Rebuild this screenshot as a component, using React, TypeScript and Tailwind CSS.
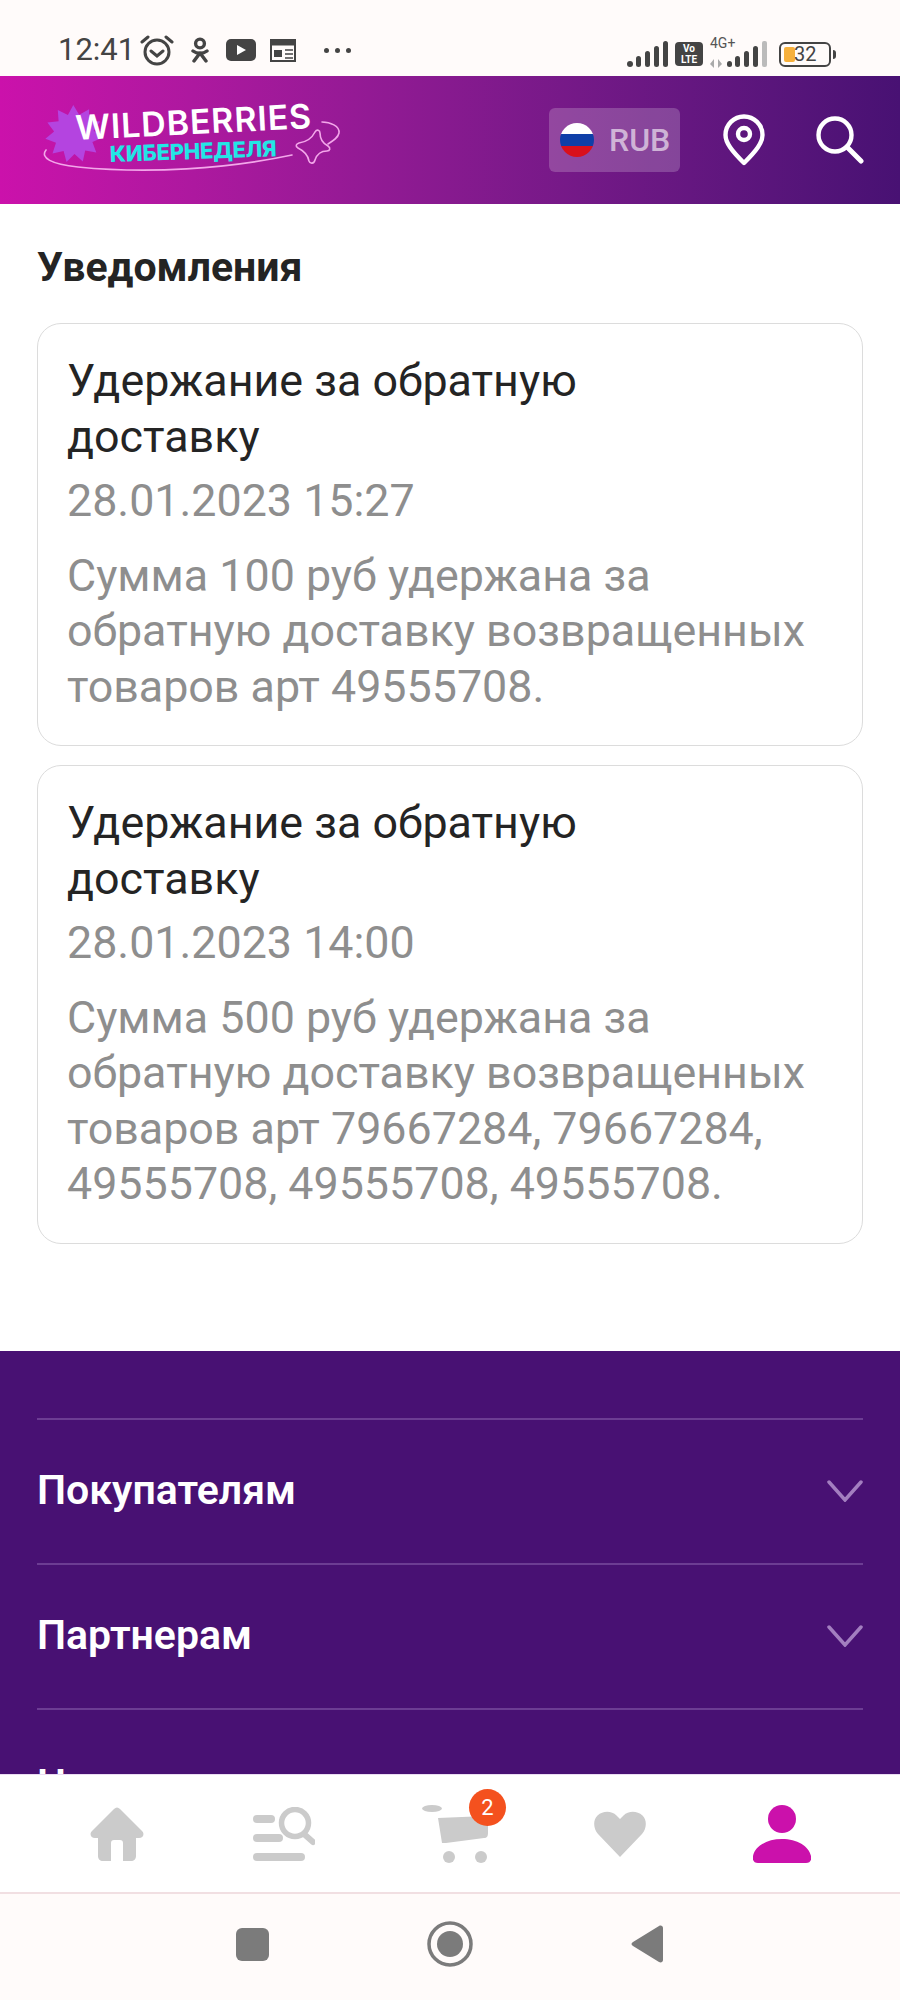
const font = "font-['Roboto','Noto_Sans',sans-serif]";

const notices = [
  {
    date: "28.01.2023 15:27",
    text: "Сумма 100 руб удержана за обратную доставку возвращенных товаров арт 49555708.",
  },
  {
    date: "28.01.2023 14:00",
    text: "Сумма 500 руб удержана за обратную доставку возвращенных товаров арт 79667284, 79667284, 49555708, 49555708, 49555708.",
  },
];

// spiky badge behind the logo
const starPoints = Array.from({ length: 22 }, (_, i) => {
  const r = i % 2 === 0 ? 29 : 20;
  const a = (i / 22) * Math.PI * 2 + 0.12;
  return `${(74 + r * Math.cos(a)).toFixed(1)},${(58 + r * Math.sin(a)).toFixed(1)}`;
}).join(" ");

const Logo = () => (
  <svg width="350" height="128" viewBox="0 0 350 128" className="shrink-0">
    <polygon points={starPoints} fill="#b444e0" />
    <text x="0" y="0" transform="translate(76 64) rotate(-2.9)" fill="#fff" fontFamily="Inter, sans-serif" fontSize="34" fontWeight="600" textLength="236">
      WILDBERRIES
    </text>
    <text x="0" y="0" transform="translate(110 86) rotate(-2)" fill="#22e6e6" fontFamily="Inter, sans-serif" fontSize="22" fontWeight="800" textLength="167">
      КИБЕРНЕДЕЛЯ
    </text>
    <path d="M46 74c-6 8 5 14 32 17 70 7 148 2 214-12" fill="none" stroke="#f3a7ea" strokeWidth="1.6" strokeLinecap="round" />
    <path d="M322 46c8 0 18 4 17 11-1 5-6 8-11 11" fill="none" stroke="#f3a7ea" strokeWidth="1.6" strokeLinecap="round" />
    <path
      d="M315 56c2-3 5-2 5 1 0 6 2 10 8 13 3 2 2 5-1 5-6 0-10 3-12 9-1 4-5 4-6 1-1-6-5-10-11-13-3-2-2-4 1-5 7-1 13-5 16-11z"
      fill="none"
      stroke="#f3a7ea"
      strokeWidth="1.6"
    />
  </svg>
);

const StatusBar = () => (
  <div className="h-[76px] bg-[#fffbfa] flex items-end justify-between pl-[58px] pr-[64px] pb-[8px] text-[#444]">
    <div className="flex items-center">
      <span className="text-[31px] leading-[36px]">12:41</span>
      <svg width="34" height="32" viewBox="0 0 34 32" className="ml-[5px]" fill="none" stroke="#444" strokeWidth="3">
        <circle cx="17" cy="18" r="12" />
        <path d="M11 17l6 5 6-5M2 8l6-5M32 8l-6-5" strokeLinecap="round" />
      </svg>
      <svg width="18" height="26" viewBox="0 0 18 26" className="ml-[17px]" fill="none" stroke="#444" strokeWidth="3.4">
        <circle cx="9" cy="6.5" r="4.4" />
        <path d="M2 14c4 3 10 3 14 0M9 16l-6 8M9 16l6 8" strokeLinecap="round" />
      </svg>
      <svg width="30" height="22" viewBox="0 0 30 22" className="ml-[17px]">
        <rect width="30" height="22" rx="5" fill="#444" />
        <path d="M11 6l9 5-9 5z" fill="#fff" />
      </svg>
      <svg width="26" height="24" viewBox="0 0 26 24" className="ml-[14px]" fill="none" stroke="#444" strokeWidth="2">
        <rect x="1" y="2" width="24" height="21" />
        <path d="M1 5h24" strokeWidth="5" />
        <path d="M4 12h8v7H4z" fill="#444" stroke="none" />
        <path d="M15 12h8M15 16h8M15 20h8" strokeWidth="1.5" />
      </svg>
      <div className="flex gap-[6px] ml-[28px]">
        <span className="w-[5px] h-[5px] rounded-full bg-[#444]" />
        <span className="w-[5px] h-[5px] rounded-full bg-[#444]" />
        <span className="w-[5px] h-[5px] rounded-full bg-[#444]" />
      </div>
    </div>
    <div className="flex items-center">
      <svg width="41" height="26" viewBox="0 0 41 26" fill="#444">
        <rect x="0" y="20" width="6" height="6" rx="3" />
        <rect x="9" y="15" width="5" height="11" rx="2.5" />
        <rect x="18" y="10" width="5" height="16" rx="2.5" />
        <rect x="27" y="5" width="5" height="21" rx="2.5" />
        <rect x="36" y="0" width="5" height="26" rx="2.5" />
      </svg>
      <div className="ml-[7px] w-[28px] h-[24px] rounded-[4px] bg-[#444] text-white text-[10px] leading-[11px] font-bold text-center flex flex-col justify-center">
        <span>Vo</span>
        <span>LTE</span>
      </div>
      <div className="ml-[7px] w-[28px] h-[28px] relative">
        <span className="absolute left-0 top-[-4px] text-[14px] leading-[14px] text-[#555]">4G+</span>
        <svg width="12" height="9" viewBox="0 0 12 9" className="absolute left-0 bottom-0" fill="#aaa">
          <path d="M4 0v9L0 5zM8 0v9l4-4z" />
        </svg>
      </div>
      <svg width="40" height="26" viewBox="0 0 40 26" fill="#444" className="ml-[-11px]">
        <rect x="0" y="20" width="5" height="6" rx="2.5" />
        <rect x="8" y="15" width="5" height="11" rx="2.5" />
        <rect x="17" y="10" width="5" height="16" rx="2.5" />
        <rect x="26" y="5" width="5" height="21" rx="2.5" />
        <rect x="35" y="0" width="5" height="26" rx="2" fill="#bbb" />
      </svg>
      <div className="ml-[12px] w-[52px] h-[25px] rounded-[6px] border-2 border-[#444] relative flex items-center">
        <span className="absolute left-[3px] top-[3px] w-[11px] h-[15px] bg-[#f6b03c] rounded-[2px]" />
        <span className="relative ml-[13px] text-[20px] leading-[21px] text-[#444]">32</span>
      </div>
      <span className="ml-[2px] w-[3px] h-[9px] rounded-r-sm bg-[#444]" />
    </div>
  </div>
);

const Header = () => (
  <header className="h-[128px] bg-gradient-to-r from-[#cb11ab] to-[#481173] flex items-center">
    <Logo />
    <div className="ml-auto flex items-center pr-[36px]">
      <div className="w-[131px] h-[64px] rounded-[6px] bg-white/20 flex items-center pl-[11px] gap-[15px]">
        <svg width="34" height="34" viewBox="0 0 34 34">
          <defs>
            <clipPath id="flag">
              <circle cx="17" cy="17" r="17" />
            </clipPath>
          </defs>
          <g clipPath="url(#flag)">
            <rect width="34" height="12" fill="#fff" />
            <rect y="11" width="34" height="12" fill="#0f3fa8" />
            <rect y="23" width="34" height="11" fill="#d9101c" />
          </g>
        </svg>
        <span className={`${font} text-[32px] font-medium text-white/60`}>RUB</span>
      </div>
      <svg width="42" height="52" viewBox="0 0 42 52" className="ml-[43px]" fill="none" stroke="#fff" strokeWidth="4.4" strokeLinejoin="round">
        <path d="M21 49C9 37 2.5 29 2.5 21a18.5 18.5 0 0 1 37 0c0 8-6.500 16-18.500 28z" />
        <circle cx="21" cy="20" r="6" />
      </svg>
      <svg width="48" height="48" viewBox="0 0 48 48" className="ml-[51px]" fill="none" stroke="#fff" strokeWidth="4.4" strokeLinecap="round">
        <circle cx="19" cy="19" r="16.500" />
        <path d="M31 31l14 14" strokeWidth="5" />
      </svg>
    </div>
  </header>
);

const NoticeCard = ({ date, text }: { date: string; text: string }) => (
  <div className="border-[1.5px] border-[#dcdcdc] rounded-[24px] pl-[29px] pr-[40px] pt-[29px] pb-[31px]">
    <h3 className="text-[44.8px] leading-[55.5px] text-[#242424] max-w-[600px]">Удержание за обратную доставку</h3>
    <p className="text-[44.8px] leading-[55.5px] mt-[9px] text-[#8e8e8e]">{date}</p>
    <p className="text-[44.8px] leading-[55.5px] mt-[19px] text-[#8e8e8e]">{text}</p>
  </div>
);

const FooterRow = ({ title, className = "" }: { title: string; className?: string }) => (
  <div className={`h-[145px] border-t-2 border-[#6c3d93] flex items-center justify-between ${className}`}>
    <span className="text-[41px] font-semibold text-white">{title}</span>
    <svg width="36" height="22" viewBox="0 0 36 22" fill="none" stroke="#a37fc0" strokeWidth="3.500" strokeLinecap="round">
      <path d="M2 2l16 18L34 2" />
    </svg>
  </div>
);

const BottomNav = () => (
  <nav className="h-[118px] bg-white grid grid-cols-5 px-[35px] border-t border-[#eadcf2]">
    <div className="flex items-center justify-center">
      <svg width="54" height="54" viewBox="0 0 54 54" fill="#cbcbcb" className="mr-[2px]">
        <path d="M24 2c2-2 4-2 6 0l22 22c3 3 1 7-3 7h-3v18c0 3-2 5-5 5h-8V36c0-2-1-3-3-3h-6c-2 0-3 1-3 3v18h-8c-3 0-5-2-5-5V31H5c-4 0-6-4-3-7z" />
      </svg>
    </div>
    <div className="flex items-center justify-center">
      <svg width="62" height="54" viewBox="0 0 62 54" fill="#cbcbcb">
        <rect x="0" y="8" width="22" height="8" rx="4" />
        <rect x="0" y="27" width="30" height="8" rx="4" />
        <rect x="0" y="46" width="52" height="8" rx="4" />
        <circle cx="42" cy="16" r="13.500" fill="none" stroke="#cbcbcb" strokeWidth="5.500" />
        <path d="M51 27l9 8" stroke="#cbcbcb" strokeWidth="6" strokeLinecap="round" />
      </svg>
    </div>
    <div className="relative flex items-center justify-center">
      <svg width="66" height="58" viewBox="0 0 66 58" fill="#cbcbcb" className="ml-[10px]">
        <ellipse cx="10" cy="3.500" rx="10" ry="3.500" />
        <path d="M16 13l48-2c2 0 2 1 2 3v14c0 3-1 5-4 5l-38 5-4 0z" />
        <circle cx="27" cy="52" r="6" />
        <circle cx="59" cy="52" r="6" />
      </svg>
      <span className="absolute left-[102px] top-[14px] w-[37px] h-[37px] rounded-full bg-[#f4511e] text-white text-[22px] leading-[37px] text-center">2</span>
    </div>
    <div className="flex items-center justify-center">
      <svg width="52" height="46" viewBox="0 0 52 46" fill="#cbcbcb" className="ml-[8px]">
        <path d="M26 46L4 23C-1 17-1 9 3.500 4.500c5.500-5 14-5 19 0L26 8l3.500-3.500c5-5 13.500-5 19 0C53 9 53 17 48 23z" />
      </svg>
    </div>
    <div className="flex items-center justify-center">
      <svg width="58" height="58" viewBox="0 0 58 58" fill="#cb11ab">
        <circle cx="29" cy="14" r="14" />
        <path d="M0 51C2 41 14 34 29 34s27 7 29 17c1 4-1 7-5 7H5c-4 0-6-3-5-7z" />
      </svg>
    </div>
  </nav>
);

const SystemBar = () => (
  <div className="h-[108px] bg-[#fffbfa] border-t-2 border-[#f1dfe2] flex items-center pb-[6px]">
    <div className="ml-[236px] w-[33px] h-[33px] rounded-[6px] bg-[#7b7b7b]" />
    <svg width="46" height="46" viewBox="0 0 46 46" className="ml-[158px]">
      <circle cx="23" cy="23" r="21" fill="none" stroke="#7b7b7b" strokeWidth="3.500" />
      <circle cx="23" cy="23" r="13" fill="#7b7b7b" />
    </svg>
    <svg width="32" height="38" viewBox="0 0 32 38" className="ml-[158px]" fill="#7b7b7b">
      <path d="M28 1c2-1 4 0 4 2v32c0 2-2 3-4 2L2 21c-2-1-2-3 0-4z" />
    </svg>
  </div>
);

export default function App() {
  return (
    <div className={`${font} w-[900px] h-[2000px] flex flex-col bg-white overflow-hidden`}>
      <StatusBar />
      <Header />
      <main className="flex-1 min-h-0 overflow-hidden">
        <div className="px-[37px]">
          <h1 className="pt-[40px] text-[41px] leading-[46px] font-bold text-[#242424]">Уведомления</h1>
          <div className="mt-[33px] flex flex-col gap-[19px]">
            {notices.map((n) => (
              <NoticeCard key={n.date} date={n.date} text={n.text} />
            ))}
          </div>
        </div>
        <footer className="mt-[107px] bg-[#481173] px-[37px] pt-[67px] pb-[40px]">
          <FooterRow title="Покупателям" />
          <FooterRow title="Партнерам" />
          <FooterRow title="Наши проекты" className="pt-[8px]" />
        </footer>
      </main>
      <BottomNav />
      <SystemBar />
    </div>
  );
}
